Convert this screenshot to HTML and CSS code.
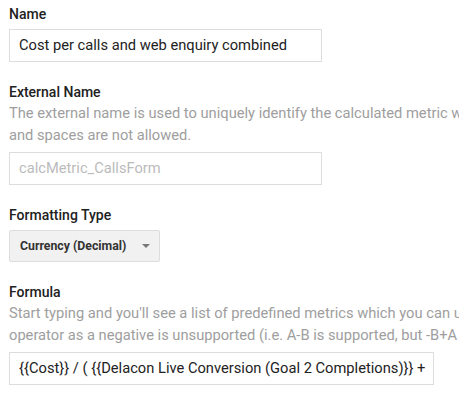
FILE: index.html
```html
<!DOCTYPE html>
<html lang="en">
<head>
  <meta charset="UTF-8" />
  <title>Calculated Metric</title>
  <link rel="stylesheet" href="styles.css">
</head>
<body>

  <div class="form">
    <!-- Name -->
    <div class="field">
      <label class="label">Name</label>
      <div class="input">Cost per calls and web enquiry combined</div>
    </div>

    <!-- External name -->
    <div class="field">
      <label class="label">External Name</label>
      <p class="help">The external name is used to uniquely identify the calculated metric w<br>and spaces are not allowed.</p>
      <div class="input placeholder">calcMetric_CallsForm</div>
    </div>

    <!-- Formatting type -->
    <div class="field">
      <label class="label">Formatting Type</label>
      <button class="dropdown">Currency (Decimal) <span class="caret"></span></button>
    </div>

    <!-- Formula -->
    <div class="field">
      <label class="label">Formula</label>
      <p class="help">Start typing and you'll see a list of predefined metrics which you can u<br>operator as a negative is unsupported (i.e. A-B is supported, but -B+A</p>
      <div class="input wide">{{Cost}} / ( {{Delacon Live Conversion (Goal 2 Completions)}} +</div>
    </div>
  </div>

</body>
</html>
```

FILE: styles.css
```css
* { box-sizing: border-box; margin: 0; padding: 0; }
body {
  font-family: Roboto, "Noto Sans", sans-serif;
  font-size: 14.7px;
  color: #333;
  background: #fff;
  overflow: hidden;
}
.form {
  padding: 4px 0 0 9px;
}
.field { margin-bottom: 20px; }
.label {
  display: block;
  font-weight: 500;
  font-size: 14px;
  line-height: 20px;
  color: #212121;
}
.help {
  color: #9e9e9e;
  line-height: 22px;
  white-space: nowrap;
  margin-bottom: 6px;
}
.input {
  width: 313px;
  height: 33px;
  margin-top: 5px;
  padding: 0 9px;
  border: 1px solid #ddd;
  line-height: 31px;
  white-space: nowrap;
  overflow: hidden;
  color: #222;
}
.help + .input { margin-top: 0; }
.placeholder { color: #bbb; }
.wide { width: 425px; }
.dropdown {
  display: flex;
  align-items: center;
  width: 151px;
  height: 32px;
  margin-top: 5px;
  padding: 0 0 0 10px;
  background: #f1f1f1;
  border: 1px solid #ddd;
  border-radius: 2px;
  font-family: inherit;
  font-size: 12.3px;
  font-weight: 700;
  color: #333;
}
.caret {
  margin-left: 16px;
  width: 0;
  height: 0;
  border-left: 4px solid transparent;
  border-right: 4px solid transparent;
  border-top: 4px solid #777;
}
```
